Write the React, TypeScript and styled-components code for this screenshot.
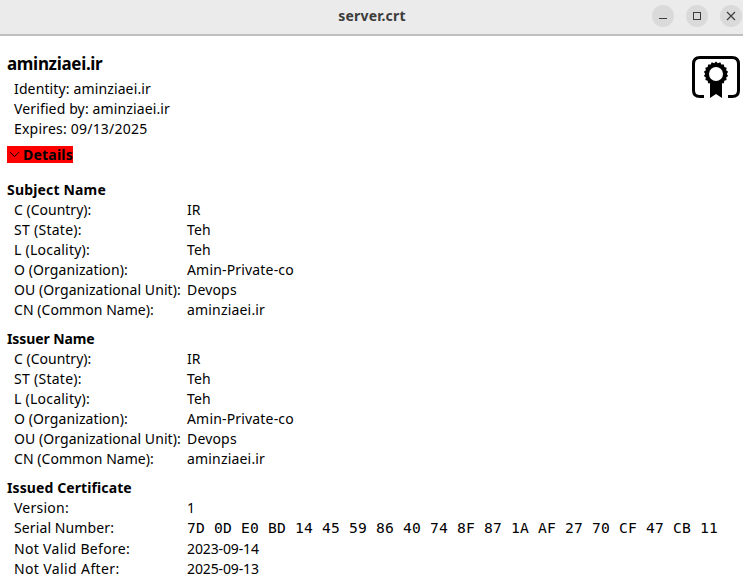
import React from "react";
import styled, { createGlobalStyle } from "styled-components";

const GlobalStyle = createGlobalStyle`
  * { box-sizing: border-box; }
  body { margin: 0; background: #fff; color: #000; font: 14px/20px "Noto Sans", sans-serif; overflow: hidden; }
`;

const Window = styled.main`
  width: 743px;
  height: 582px;
  overflow: hidden;
  background: #fff;
`;

const TitleBar = styled.header`
  display: grid;
  grid-template-columns: 1fr auto 1fr;
  align-items: center;
  height: 36px;
  padding: 0 1px 2px 0;
  background: #ebebeb;
  border-bottom: 2px solid #bfbfbf;
`;

const WindowTitle = styled.h1`
  grid-column: 2;
  margin: 0;
  padding-left: 2px;
  font-size: 14px;
  line-height: 20px;
  font-weight: 700;
  letter-spacing: 0.2px;
  color: #3d3d3d;
`;

const Controls = styled.div`
  display: flex;
  justify-content: flex-end;
  gap: 12px;
`;

const ControlButton = styled.button`
  width: 22px;
  height: 22px;
  padding: 0;
  border: 0;
  border-radius: 50%;
  background: #dadada;
  svg { display: block; }
`;

const Content = styled.div`
  padding: 17px 3px 0 7px;
`;

const Summary = styled.section`
  display: flex;
  justify-content: space-between;
`;

const Heading = styled.h2`
  margin: 0 0 5px;
  font-size: 17px;
  line-height: 21px;
  font-weight: 700;
  letter-spacing: -0.32px;
`;

const Track = styled.span<{ $track: number }>`
  display: block;
  white-space: pre;
  letter-spacing: ${(p) => p.$track}px;
`;

const SummaryLines = styled.div`
  padding-left: 7px;
`;

const Badge = styled.svg`
  display: block;
  margin-top: 3px;
`;

const Expander = styled.button`
  display: flex;
  align-items: center;
  width: 66px;
  height: 17px;
  margin: 7px 0 0;
  padding: 0 0 0 2px;
  border: 0;
  background: #f00;
  color: #000;
  font: 700 14px/17px "Noto Sans", sans-serif;
  gap: 3px;
`;

const Section = styled.section<{ $top: number }>`
  margin-top: ${(p) => p.$top}px;
`;

const SectionTitle = styled.h3`
  margin: 0;
  font-size: 14px;
  line-height: 20px;
  font-weight: 700;
`;

const Fields = styled.dl`
  display: grid;
  grid-template-columns: 173px 1fr;
  margin: 0;
  padding-left: 7px;
`;

const Label = styled.dt<{ $tall?: boolean }>`
  height: ${(p) => (p.$tall ? 21 : 20)}px;
`;

const Value = styled.dd<{ $mono?: boolean }>`
  margin: 0;
  font-family: ${(p) => (p.$mono ? '"DejaVu Sans Mono", monospace' : "inherit")};
  font-size: ${(p) => (p.$mono ? "14.67px" : "14px")};
`;

type Text = [string, number];
type Field = { label: Text; value: Text; mono?: boolean };

const nameFields: Field[] = [
  { label: ["C (Country):", 0], value: ["IR", 0] },
  { label: ["ST (State):", 0.28], value: ["Teh", 0.1] },
  { label: ["L (Locality):", 0.24], value: ["Teh", 0.1] },
  { label: ["O (Organization):", 0.09], value: ["Amin-Private-co", 0.17] },
  { label: ["OU (Organizational Unit):", 0.065], value: ["Devops", 0.17] },
  { label: ["CN (Common Name):", 0.05], value: ["aminziaei.ir", 0.18] },
];

const certificateFields: Field[] = [
  { label: ["Version:", 0.24], value: ["1", 0] },
  {
    label: ["Serial Number:", 0.11],
    value: ["7D 0D E0 BD 14 45 59 86 40 74 8F 87 1A AF 27 70 CF 47 CB 11", 0.176],
    mono: true,
  },
  { label: ["Not Valid Before:", 0.32], value: ["2023-09-14", -0.13] },
  { label: ["Not Valid After:", 0.38], value: ["2025-09-13", -0.13] },
];

const summary: Text[] = [
  ["Identity: aminziaei.ir", 0.13],
  ["Verified by: aminziaei.ir", 0.13],
  ["Expires: 09/13/2025", 0.21],
];

function Group({ title, fields, top }: { title: Text; fields: Field[]; top: number }) {
  return (
    <Section $top={top}>
      <SectionTitle><Track $track={title[1]}>{title[0]}</Track></SectionTitle>
      <Fields>
        {fields.map((f) => (
          <React.Fragment key={f.label[0]}>
            <Label $tall={f.mono}><Track $track={f.label[1]}>{f.label[0]}</Track></Label>
            <Value $mono={f.mono}><Track $track={f.value[1]}>{f.value[0]}</Track></Value>
          </React.Fragment>
        ))}
      </Fields>
    </Section>
  );
}

const teeth = Array.from({ length: 36 }, (_, i) => {
  const a = (i * Math.PI) / 18;
  const r = i % 2 ? 10.8 : 12.3;
  return `${(24 + r * Math.sin(a)).toFixed(2)},${(17.9 - r * Math.cos(a)).toFixed(2)}`;
}).join(" ");

function CertificateBadge() {
  return (
    <Badge width="48" height="43" viewBox="0 0 48 43" aria-label="Certificate">
      <path d="M12 40.5H8Q1.5 40.5 1.5 34.5V8Q1.5 1.5 8 1.5H40Q46.5 1.5 46.5 8V34.5Q46.5 40.5 40 40.5H36" fill="none" stroke="#000" strokeWidth="3" />
      <path d="M18 26H30V42L24 38L18 42Z" />
      <polygon points={teeth} />
      <circle cx="24" cy="18" r="7" fill="#fff" />
    </Badge>
  );
}

export default function App() {
  return (
    <>
      <GlobalStyle />
      <Window>
        <TitleBar>
          <WindowTitle>server.crt</WindowTitle>
          <Controls>
            <ControlButton aria-label="Minimize">
              <svg width="22" height="22"><path d="M7 13.5H15" stroke="#3d3d3d" /></svg>
            </ControlButton>
            <ControlButton aria-label="Maximize">
              <svg width="22" height="22"><rect x="7.5" y="7.5" width="7" height="7" fill="none" stroke="#3d3d3d" /></svg>
            </ControlButton>
            <ControlButton aria-label="Close">
              <svg width="22" height="22"><path d="M7 7L15 15M15 7L7 15" stroke="#3d3d3d" strokeWidth="1.2" /></svg>
            </ControlButton>
          </Controls>
        </TitleBar>
        <Content>
          <Summary>
            <div>
              <Heading>aminziaei.ir</Heading>
              <SummaryLines>
                {summary.map(([text, track]) => <Track key={text} $track={track}>{text}</Track>)}
              </SummaryLines>
            </div>
            <CertificateBadge />
          </Summary>
          <Expander>
            <svg width="11" height="7"><path d="M0.8 1L5.5 5.5L10.2 1" fill="none" stroke="#000" /></svg>
            <Track $track={0.23}>Details</Track>
          </Expander>
          <Group title={["Subject Name", 0.17]} fields={nameFields} top={17} />
          <Group title={["Issuer Name", -0.1]} fields={nameFields} top={9} />
          <Group title={["Issued Certificate", 0.1]} fields={certificateFields} top={9} />
        </Content>
      </Window>
    </>
  );
}
